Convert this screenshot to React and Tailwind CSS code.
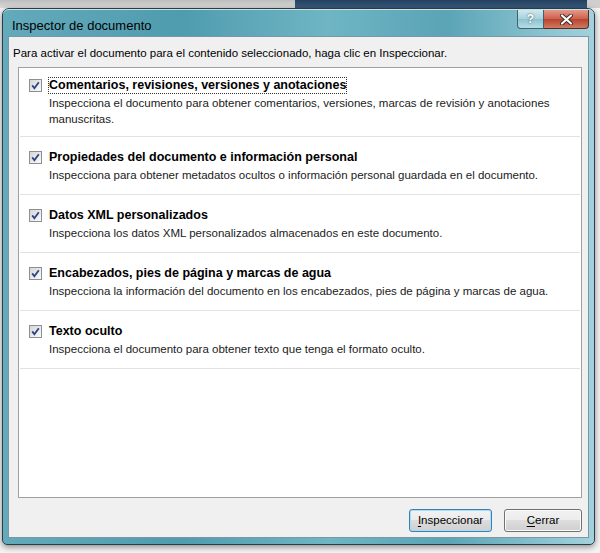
import React from "react";

const items = [
	{
		title: "Comentarios, revisiones, versiones y anotaciones",
		lines: [
			"Inspecciona el documento para obtener comentarios, versiones, marcas de revisión y anotaciones",
			"manuscritas.",
		],
		focused: true,
	},
	{
		title: "Propiedades del documento e información personal",
		lines: [
			"Inspecciona para obtener metadatos ocultos o información personal guardada en el documento.",
		],
	},
	{
		title: "Datos XML personalizados",
		lines: ["Inspecciona los datos XML personalizados almacenados en este documento."],
	},
	{
		title: "Encabezados, pies de página y marcas de agua",
		lines: [
			"Inspecciona la información del documento en los encabezados, pies de página y marcas de agua.",
		],
	},
	{
		title: "Texto oculto",
		lines: ["Inspecciona el documento para obtener texto que tenga el formato oculto."],
	},
];

const Check = () => (
	<span className="flex h-[13px] w-[13px] shrink-0 items-center justify-center border border-[#8e8f8f] bg-gradient-to-br from-[#d6d6d6] to-[#fbfbfb]">
		<svg width="9" height="9" viewBox="0 0 9 9">
			<path d="M1.2 4.4 L3.4 7.3 L7.8 1.2" fill="none" stroke="#2e4585" strokeWidth="1.8" />
		</svg>
	</span>
);

const Button = ({ label, hot, primary, width }) => (
	<button
		className={
			"flex h-[23px] items-center justify-center rounded-[3px] border bg-[linear-gradient(#f2f2f2,#ebebeb_50%,#dddddd_50%,#cfcfcf)] text-[11.5px] text-black " +
			(primary
				? "border-[#3c7fb1] shadow-[inset_0_0_0_1px_#a9dcf6]"
				: "border-[#707070] shadow-[inset_0_0_0_1px_#fbfbfb]")
		}
		style={{ width }}
	>
		<span className="underline underline-offset-2">{hot}</span>
		{label}
	</button>
);

export default function App() {
	return (
		<div
			className="flex h-[553px] w-[600px] flex-col overflow-hidden bg-[#f4f4f4]"
			style={{ fontFamily: '"Liberation Sans", Arial, sans-serif' }}
		>
			{/* desktop behind the dialog */}
			<div className="flex h-[8px] shrink-0">
				<div className="flex-1 bg-gradient-to-b from-[#bdbdbd] to-[#dcdcdc]" />
				<div className="w-[292px] bg-gradient-to-b from-[#24405f] to-[#3a5a7e]" />
				<div className="w-[13px] bg-[#cfcfcf]" />
			</div>

			{/* dialog frame */}
			<div className="ml-[2px] flex h-[537px] w-[593px] shrink-0 flex-col rounded-t-[7px] rounded-b-[5px] border border-[#2d3b44] bg-[linear-gradient(90deg,#63aabb,#4f9caf_30%,#6fb5c4_55%,#5aa4b6_75%,#a2d2dd)] shadow-[0_2px_6px_rgba(0,0,0,0.45)]">
				<div className="flex h-[27px] shrink-0 items-start justify-between rounded-t-[6px] border-t border-[#c6e3ea] pl-[9px] pr-[5px]">
					<span className="pt-[6px] text-[13px] text-black">Inspector de documento</span>
					<div className="flex">
						<div className="flex h-[19px] w-[27px] items-center justify-center rounded-bl-[4px] border border-t-0 border-[#40606c] bg-[linear-gradient(#cfe9ef,#a6d1dc_50%,#8cc2cf_50%,#b5dde6)]">
							<span className="text-[12px] font-bold leading-none text-white [text-shadow:0_0_2px_#304a55]">?</span>
						</div>
						<div className="flex h-[19px] w-[45px] items-center justify-center rounded-br-[4px] border border-l-0 border-t-0 border-[#5a2a24] bg-[linear-gradient(#e49a8c,#cc604b_50%,#b8412c_50%,#d07a62)]">
							<svg width="13" height="11" viewBox="0 0 13 11">
								<path d="M2 1.5 L11 9.5 M11 1.5 L2 9.5" stroke="#3b2a28" strokeWidth="4" strokeLinecap="round" />
								<path d="M2 1.5 L11 9.5 M11 1.5 L2 9.5" stroke="#ffffff" strokeWidth="2.2" strokeLinecap="round" />
							</svg>
						</div>
					</div>
				</div>

				{/* client area */}
				<div className="mx-[5px] flex flex-1 flex-col border border-[#7b97a3] bg-[#f0f0f0]">
					<p className="pl-[4px] pt-[8px] text-[11.5px] leading-[16px] text-black">
						Para activar el documento para el contenido seleccionado, haga clic en Inspeccionar.
					</p>

					<div className="ml-[9px] mr-[6px] mt-[6px] h-[431px] border border-[#a0a0a0] bg-white px-[1px]">
						{items.map((it) => (
							<div
								key={it.title}
								className="border-b border-[#e2e2e2] pb-[11px] pl-[9px] pt-[13px] first:pb-[9px] first:pt-[10px]"
							>
								<div className="flex items-center gap-[7px]">
									<Check />
									<span
										className={
											"text-[12.5px] font-bold leading-[15px] text-black " +
											(it.focused ? "outline outline-1 outline-dotted outline-[#333]" : "")
										}
									>
										{it.title}
									</span>
								</div>
								<div className="mt-[2px] pl-[20px] text-[11.5px] leading-[16px] text-[#1a1a1a]">
									{it.lines.map((l) => (
										<div key={l}>{l}</div>
									))}
								</div>
							</div>
						))}
					</div>

					<div className="mr-[6px] mt-[11px] flex justify-end gap-[12px]">
						<Button hot="I" label="nspeccionar" primary width={83} />
						<Button hot="C" label="errar" width={78} />
					</div>
				</div>
				<div className="h-[6px] shrink-0" />
			</div>
		</div>
	);
}
